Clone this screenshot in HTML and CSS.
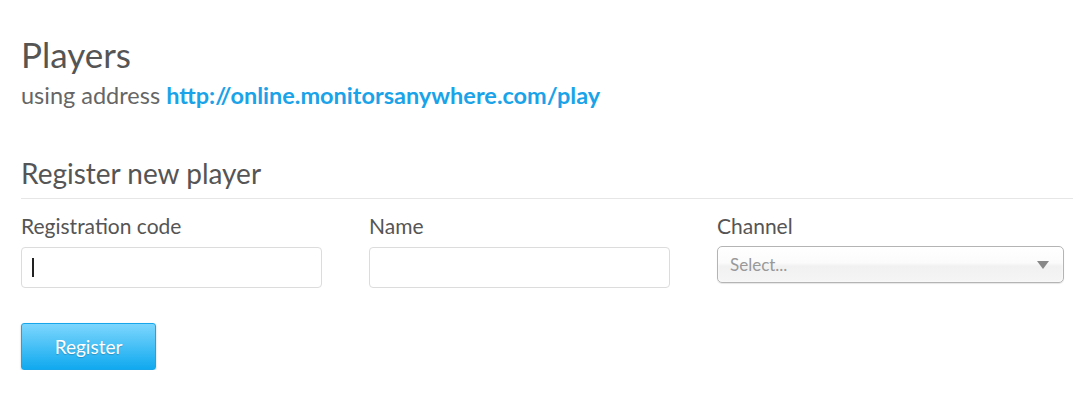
FILE: index.html
```html
<!DOCTYPE html>
<html>
<head>
    <meta charset="UTF-8">
    <title>Players</title>
    <link rel="stylesheet" href="styles.css">
</head>
<body>
    <div class="page">
        <h1>Players</h1>
        <p class="address">using address <a href="#">http://online.monitorsanywhere.com/play</a></p>

        <h2>Register new player</h2>
        <div class="form-row">
            <div class="form-group">
                <label for="regCode">Registration code</label>
                <div class="input-wrap">
                    <input type="text" id="regCode">
                    <span class="caret"></span>
                </div>
            </div>
            <div class="form-group">
                <label for="playerName">Name</label>
                <input type="text" id="playerName">
            </div>
            <div class="form-group">
                <label>Channel</label>
                <div class="chosen">
                    <span>Select...</span>
                    <b class="arrow"></b>
                </div>
            </div>
        </div>
        <button class="btn-register">Register</button>
    </div>
</body>
</html>
```

FILE: styles.css
```css
body {
    margin: 0;
    background: #fff;
    font-family: Lato, "Noto Sans", sans-serif;
    color: #555;
}

.page {
    width: 1052px;
    padding: 33px 0 0 21px;
}

h1 {
    margin: 0;
    font-size: 35px;
    line-height: 42px;
    font-weight: normal;
    color: #555;
}

.address {
    margin: 6px 0 0;
    font-size: 23.5px;
    line-height: 28px;
    color: #666;
}

.address a {
    color: #1aa3e8;
    font-weight: bold;
    text-decoration: none;
}

h2 {
    margin: 47px 0 0;
    padding-bottom: 8px;
    border-bottom: 1px solid #e6e6e6;
    font-size: 28px;
    line-height: 34px;
    font-weight: normal;
    color: #555;
}

.form-row {
    display: grid;
    grid-template-columns: 301px 301px 347px;
    column-gap: 47px;
    margin-top: 15px;
}

.form-group label {
    display: block;
    font-size: 21px;
    line-height: 24px;
    color: #555;
    margin-bottom: 9px;
}

.form-group input {
    display: block;
    width: 100%;
    height: 41px;
    box-sizing: border-box;
    border: 1px solid #dcdcdc;
    border-radius: 4px;
    padding: 0 10px;
    font-size: 18px;
    outline: none;
}

.input-wrap {
    position: relative;
}

.caret {
    position: absolute;
    left: 11px;
    top: 11px;
    width: 2px;
    height: 19px;
    background: #222;
}

.chosen {
    display: flex;
    align-items: center;
    justify-content: space-between;
    height: 37px;
    margin-top: -1px;
    box-sizing: border-box;
    padding: 0 14px 0 12px;
    border: 1px solid #b4b4b4;
    border-radius: 5px;
    background: linear-gradient(#ffffff 0%, #fbfbfb 45%, #f1f1f1 55%, #f5f5f5 100%);
    box-shadow: 0 0 3px #fff inset, 0 1px 1px rgba(0, 0, 0, 0.1);
    font-size: 17px;
    color: #999;
}

.arrow {
    width: 0;
    height: 0;
    border-left: 6px solid transparent;
    border-right: 6px solid transparent;
    border-top: 8px solid #888;
}

.btn-register {
    display: block;
    margin-top: 35px;
    width: 135px;
    height: 47px;
    border: 1px solid #16a6e9;
    border-radius: 3px;
    background: linear-gradient(#7dd6fd, #10a9ef);
    box-shadow: 0 1px 2px rgba(0, 0, 0, 0.25);
    color: #fff;
    font-family: Lato, "Noto Sans", sans-serif;
    font-size: 19px;
    text-shadow: 0 1px 1px rgba(0, 0, 0, 0.2);
    cursor: pointer;
}
```
